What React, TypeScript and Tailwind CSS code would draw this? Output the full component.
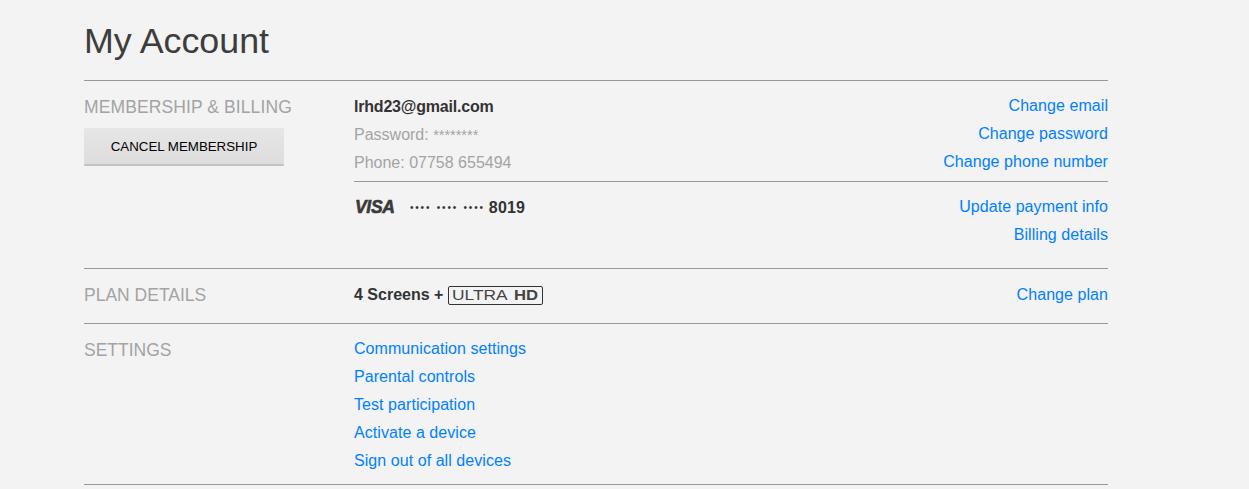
const Link = ({ children }: { children: string }) => (
  <a href="#" className="text-[#0080ff] leading-[28px] tracking-[0.06px]">
    {children}
  </a>
);

const SectionLabel = ({ children, className = "" }: { children: string; className?: string }) => (
  <h2 className={`pt-[1px] text-[17.5px] leading-[28px] text-[#a3a3a3] uppercase font-normal ${className}`}>
    {children}
  </h2>
);

const App = () => {
  return (
    <main className="h-[489px] overflow-hidden bg-[#f3f3f3] text-[16px] text-[#333] font-['Liberation_Sans',Arial,sans-serif]">
      <div className="ml-[84px] w-[1024px]">
        <h1 className="text-[35.8px] leading-[41px] pt-[21px] pb-[18px] font-normal text-[#3d3d3d]">My Account</h1>

        {/* Membership */}
        <section className="flex border-t border-[#999] pt-[11px] pb-[19px]">
          <div className="w-[270px]">
            <SectionLabel className="tracking-[0.1px]">Membership &amp; Billing</SectionLabel>
            <button className="mt-[7px] block w-[200px] h-[37px] pt-[1px] rounded-[1px] bg-gradient-to-b from-[#e6e6e6] to-[#dddddd] border-b border-[#c4c4c4] text-[13.3px] text-black uppercase shadow-[0_1px_0_rgba(0,0,0,0.2)]">
              Cancel Membership
            </button>
          </div>
          <div className="flex-1">
            <div className="flex justify-between pb-[5px]">
              <div className="leading-[28px] pt-[1px] -mb-[1px]">
                <div className="font-bold tracking-[-0.2px]">lrhd23@gmail.com</div>
                <div className="text-[#a3a3a3]">
                  Password: <span className="text-[14.5px]">********</span>
                </div>
                <div className="text-[#a3a3a3]">Phone: 07758 655494</div>
              </div>
              <div className="flex flex-col items-end">
                <Link>Change email</Link>
                <Link>Change password</Link>
                <Link>Change phone number</Link>
              </div>
            </div>
            <div className="flex justify-between border-t border-[#999] pt-[11px]">
              <div className="flex items-start leading-[28px] font-bold">
                <span className="w-[56px] pl-[1px] text-[17.5px] italic font-black tracking-[-0.3px] text-[#3a3a3a] [-webkit-text-stroke:0.6px_#3a3a3a]">
                  VISA
                </span>
                <span className="flex items-center pt-[1px]">
                  <span className="font-normal text-[10px] tracking-[1.8px] [word-spacing:1px] mr-[4px]">•••• •••• ••••</span>
                  <span className="tracking-[0.2px]">8019</span>
                </span>
              </div>
              <div className="flex flex-col items-end">
                <Link>Update payment info</Link>
                <Link>Billing details</Link>
              </div>
            </div>
          </div>
        </section>

        {/* Plan */}
        <section className="flex border-t border-[#999] pt-[12px] pb-[14px]">
          <div className="w-[270px]">
            <SectionLabel className="-mt-[1px]">Plan Details</SectionLabel>
          </div>
          <div className="flex-1 flex justify-between">
            <div className="flex items-center font-bold leading-[28px]">
              4 Screens +
              <span className="ml-[5px] flex items-center pl-[3px] w-[95px] h-[19px] rounded-[2px] border border-[#333] text-[14px] leading-none whitespace-nowrap text-[#444]">
                <span className="inline-block w-[46px] font-normal scale-x-[1.24] origin-left">ULTRA</span>
                <span className="inline-block w-[20px] ml-[16px] font-bold scale-x-[1.19] origin-left">HD</span>
              </span>
            </div>
            <Link>Change plan</Link>
          </div>
        </section>

        {/* Settings */}
        <section className="flex border-y border-[#999] pt-[11px] pb-[9px]">
          <div className="w-[270px]">
            <SectionLabel>Settings</SectionLabel>
          </div>
          <div className="flex flex-col items-start">
            <Link>Communication settings</Link>
            <Link>Parental controls</Link>
            <Link>Test participation</Link>
            <Link>Activate a device</Link>
            <Link>Sign out of all devices</Link>
          </div>
        </section>
      </div>
    </main>
  );
};

export default App;
